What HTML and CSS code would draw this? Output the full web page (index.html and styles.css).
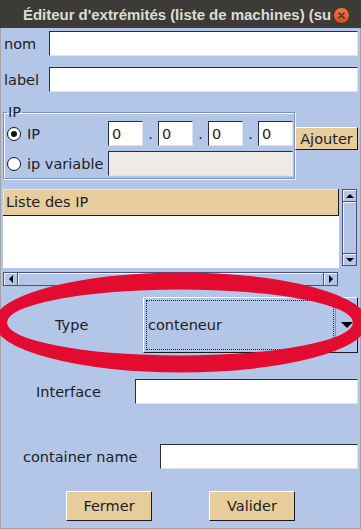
FILE: index.html
```html
<!DOCTYPE html>
<html lang="fr">
<head>
  <meta charset="UTF-8">
  <meta name="viewport" content="width=device-width, initial-scale=1.0">
  <title>Éditeur d'extrémités</title>
  <link rel="stylesheet" href="styles.css">
</head>
<body>
  <div class="window">
    <div class="titlebar">
      <span class="title">Éditeur d'extrémités (liste de machines) (su</span>
      <svg class="close" width="17" height="17" viewBox="0 0 17 17">
        <defs>
          <linearGradient id="closeGrad" x1="0" y1="0" x2="0" y2="1">
            <stop offset="0" stop-color="#f4794a"/>
            <stop offset="1" stop-color="#d8481b"/>
          </linearGradient>
        </defs>
        <circle cx="8.5" cy="8.5" r="8" fill="url(#closeGrad)" stroke="#2b2a27" stroke-width="0.8"/>
        <path d="M6 6 L11 11 M11 6 L6 11" stroke="#3c3b37" stroke-width="1.6" stroke-linecap="round"/>
      </svg>
    </div>

    <div class="row row-nom">
      <span class="lbl lbl-top">nom</span>
      <input type="text" class="text">
    </div>

    <div class="row row-label">
      <span class="lbl lbl-top">label</span>
      <input type="text" class="text">
    </div>

    <div class="ip-section">
      <fieldset class="ip-group">
        <legend>IP</legend>
        <div class="ip-line">
          <span class="choice"><span class="radio checked"></span>IP</span>
          <input type="text" class="text octet" value="0">
          <span class="dot">.</span>
          <input type="text" class="text octet" value="0">
          <span class="dot">.</span>
          <input type="text" class="text octet" value="0">
          <span class="dot">.</span>
          <input type="text" class="text octet" value="0">
        </div>
        <div class="ip-line second">
          <span class="choice"><span class="radio"></span>ip variable</span>
          <input type="text" class="text var-field" disabled>
        </div>
      </fieldset>
      <button class="btn btn-add">Ajouter</button>
    </div>

    <div class="list-area">
      <div class="list">
        <div class="list-head">Liste des IP</div>
      </div>
      <div class="vscroll">
        <div class="sb-btn"><span class="arrow up"></span></div>
        <div class="sb-thumb"></div>
        <div class="sb-btn"><span class="arrow down"></span></div>
      </div>
    </div>

    <div class="hscroll">
      <div class="sb-btn"><span class="arrow left"></span></div>
      <div class="sb-thumb"></div>
      <div class="sb-btn"><span class="arrow right"></span></div>
    </div>

    <div class="row row-type">
      <span class="lbl">Type</span>
      <div class="combo">
        <div class="combo-value">conteneur</div>
        <div class="combo-arrow"><span class="arrow down big"></span></div>
      </div>
    </div>

    <div class="row row-interface">
      <span class="lbl">Interface</span>
      <input type="text" class="text">
    </div>

    <div class="row row-container">
      <span class="lbl">container name</span>
      <input type="text" class="text">
    </div>

    <div class="actions">
      <button class="btn">Fermer</button>
      <button class="btn">Valider</button>
    </div>

    <!-- red circle drawn over the type selector -->
    <svg class="highlight" width="361" height="529" viewBox="0 0 361 529">
      <path fill="#e30b2f" fill-rule="evenodd"
        d="M -6 322.5 a 187 50 0 1 0 374 0 a 187 50 0 1 0 -374 0 Z
           M 7 322.5 a 173 33 0 1 0 346 0 a 173 33 0 1 0 -346 0 Z"/>
    </svg>
  </div>
</body>
</html>
```

FILE: styles.css
```css
* {
  box-sizing: border-box;
}

body {
  margin: 0;
  font-family: "DejaVu Sans", sans-serif;
  font-size: 14.5px;
  color: #1c1c24;
}

.window {
  position: relative;
  width: 361px;
  height: 529px;
  background-color: #b4c6e7;
  box-shadow: inset 1px 0 #a2a2a2, inset -1px 0 #a2a2a2, inset 0 -1px #a2a2a2;
  overflow: hidden;
}

.titlebar {
  height: 28px;
  background-color: #3c3b37;
  display: flex;
  align-items: center;
  padding-left: 23px;
}

.title {
  width: 310px;
  font-family: "Liberation Sans", Arial, sans-serif;
  font-weight: bold;
  font-size: 15px;
  letter-spacing: -0.03px;
  color: #dfdbd2;
  white-space: nowrap;
}

.close {
  margin-top: 2px;
}

.row {
  display: flex;
  align-items: center;
  padding: 0 3px 0 0;
}

.lbl {
  flex-shrink: 0;
}

.lbl-top {
  width: 49px;
  padding-left: 4px;
}

.row-nom {
  margin-top: 3px;
}

.row-label {
  margin-top: 11px;
}

.text {
  flex: 1;
  min-width: 0;
  height: 25px;
  margin: 0;
  padding: 0 3px;
  font: inherit;
  color: inherit;
  background-color: #fff;
  border: 1px solid;
  border-color: #2b2b45 #dce4f3 #dce4f3 #2b2b45;
  border-radius: 0;
  outline: none;
}

/* IP group */
.ip-section {
  display: flex;
  align-items: flex-start;
  margin-top: 12px;
  padding-left: 3px;
}

.ip-group {
  width: 292px;
  min-width: 0;
  margin: 0;
  padding: 1px 1px 2px 3px;
  border: 1px solid #7f8fb8;
  box-shadow: inset 1px 1px #f4f7fc, 1px 1px #f4f7fc;
}

.ip-group legend {
  padding: 0 1px;
  line-height: 16px;
}

.ip-line {
  display: flex;
  align-items: center;
  height: 25px;
}

.ip-line.second {
  margin-top: 5px;
}

.choice {
  width: 101px;
  display: flex;
  align-items: center;
  white-space: nowrap;
}

.radio {
  position: relative;
  width: 14px;
  height: 14px;
  margin-right: 6px;
  border: 1px solid #111;
  border-radius: 50%;
  background-color: #fff;
}

.radio.checked::after {
  content: "";
  position: absolute;
  left: 3px;
  top: 3px;
  width: 6px;
  height: 6px;
  border-radius: 50%;
  background-color: #111;
}

.octet {
  flex: none;
  width: 35px;
}

.dot {
  width: 15px;
  text-align: center;
}

.var-field {
  flex: none;
  width: 185px;
  background-color: #eeebe7;
}

.btn {
  margin: 0;
  padding: 0;
  font: inherit;
  color: inherit;
  background-color: #e6cd9b;
  border: 1px solid;
  border-color: #fff #1a1a1a #1a1a1a #fff;
  border-radius: 0;
}

.btn-add {
  width: 63px;
  height: 23px;
  margin-top: 23px;
}

/* list with scrollbars */
.list-area {
  display: flex;
  align-items: flex-start;
  gap: 3px;
  margin-top: 10px;
  padding-left: 3px;
}

.list {
  width: 336px;
  height: 79px;
  background-color: #fff;
}

.list-head {
  height: 27px;
  padding-left: 3px;
  line-height: 26px;
  background-color: #e6cd9b;
  border-right: 1px solid #1a1a1a;
  border-bottom: 1px solid #1a1a1a;
  box-shadow: inset 1px 1px #f3e6c8;
}

.vscroll {
  width: 15px;
  height: 77px;
  display: flex;
  flex-direction: column;
}

.hscroll {
  width: 335px;
  height: 14px;
  margin-top: 4px;
  margin-left: 3px;
  display: flex;
}

.sb-btn,
.sb-thumb {
  display: flex;
  align-items: center;
  justify-content: center;
  border: 1px solid #4e4e7c;
  box-shadow: inset 1px 1px #f2f5fb;
  background-color: #b4c6e7;
}

.vscroll .sb-btn {
  height: 13px;
}

.vscroll .sb-thumb {
  flex: 1;
  border-top: none;
  border-bottom: none;
}

.hscroll .sb-btn {
  width: 15px;
}

.hscroll .sb-thumb {
  flex: 1;
  border-left: none;
  border-right: none;
}

.arrow {
  width: 0;
  height: 0;
  border-style: solid;
  border-color: transparent;
}

.arrow.up {
  border-width: 0 4px 4px 4px;
  border-bottom-color: #000;
}

.arrow.down {
  border-width: 4px 4px 0 4px;
  border-top-color: #000;
}

.arrow.left {
  border-width: 4px 4px 4px 0;
  border-right-color: #000;
}

.arrow.right {
  border-width: 4px 0 4px 4px;
  border-left-color: #000;
}

.arrow.down.big {
  border-width: 6px 6px 0 6px;
}

/* lower form */
.row-type {
  margin-top: 11px;
}

.row-type .lbl {
  width: 143px;
  padding-left: 55px;
}

.combo {
  flex: 1;
  height: 56px;
  display: flex;
  border: 1px solid;
  border-color: #fff #1a1a1a #1a1a1a #fff;
}

.combo-value {
  flex: 1;
  margin: 2px 0 2px 2px;
  padding-left: 1px;
  display: flex;
  align-items: center;
  border: 1px dotted #222;
}

.combo-arrow {
  width: 22px;
  margin-left: 1px;
  display: flex;
  align-items: center;
  justify-content: center;
  border-left: 1px solid #7f8fb8;
}

.row-interface {
  margin-top: 26px;
}

.row-interface .lbl {
  width: 135px;
  padding-left: 36px;
}

.row-container {
  margin-top: 40px;
}

.row-container .lbl {
  width: 160px;
  padding-left: 23px;
}

.actions {
  display: flex;
  justify-content: center;
  gap: 57px;
  margin-top: 22px;
}

.actions .btn {
  width: 86px;
  height: 30px;
}

.highlight {
  position: absolute;
  top: 0;
  left: 0;
  pointer-events: none;
}
```
